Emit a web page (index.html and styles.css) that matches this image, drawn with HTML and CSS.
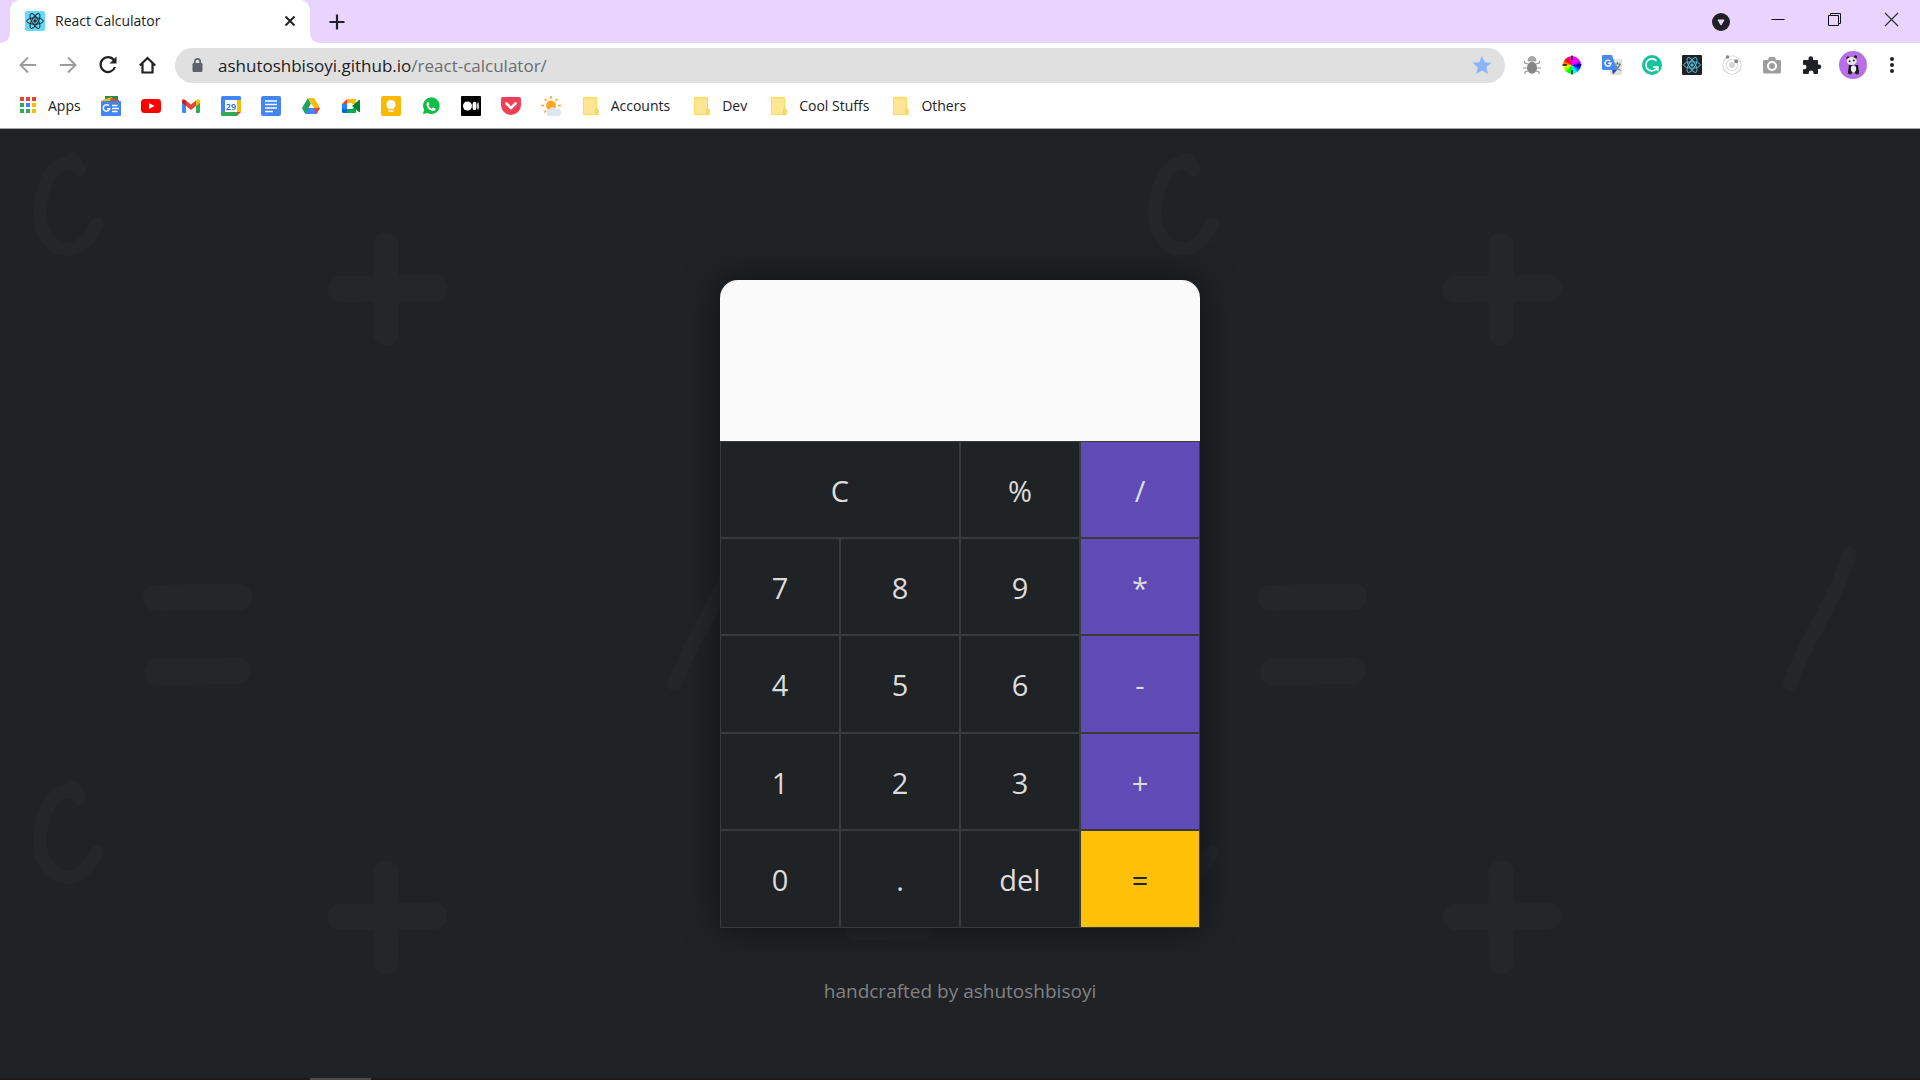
FILE: index.html
```html
<!DOCTYPE html>
<html lang="en">
<head>
<meta charset="utf-8">
<title>React Calculator</title>
<link rel="stylesheet" href="styles.css">
</head>
<body>
<svg class="defs" aria-hidden="true">
  <symbol id="atom" viewBox="0 0 20 20"><g fill="none" stroke="currentColor"><ellipse cx="10" cy="10" rx="8.300" ry="3.200"/><ellipse cx="10" cy="10" rx="8.300" ry="3.200" transform="rotate(60 10 10)"/><ellipse cx="10" cy="10" rx="8.300" ry="3.200" transform="rotate(120 10 10)"/></g><circle cx="10" cy="10" r="1.700" fill="currentColor"/></symbol>
  <symbol id="folder" viewBox="0 0 20 20"><path d="M2 2q0-1 1-1h12q1 0 1 1v16q0 1-1 1H3q-1 0-1-1z" fill="#ffd95c"/><path d="M3 2.500h12V18H3z" fill="#ffe694"/><path d="M14.500 13h1.500q1.500 0 1.500 1.500V17q0 2-1.500 2t-1.500-2z" fill="#f8dc73" stroke="#ebcd55" stroke-width=".7"/></symbol>
</svg>

<header class="browser">
  <div class="tabstrip">
    <div class="tab">
      <svg class="i20 favicon" viewBox="0 0 20 20"><rect width="20" height="20" rx="2" fill="#61dafb"/><use href="#atom" color="#20232a"/></svg>
      <span class="tab-title">React Calculator</span>
      <button class="tab-close" aria-label="Close tab"><svg class="i20" viewBox="0 0 20 20"><path d="M5.500 5.500l9 9M14.500 5.500l-9 9" stroke="#202124" stroke-width="2"/></svg></button>
    </div>
    <button class="new-tab" aria-label="New tab"><svg class="i20" viewBox="0 0 20 20"><path d="M10 2.500v15M2.500 10h15" stroke="#202124" stroke-width="2.200"/></svg></button>
    <div class="window-controls">
      <button aria-label="Search tabs"><svg class="i20" viewBox="0 0 20 20"><circle cx="10" cy="10" r="9" fill="#202124"/><path d="M7 8h6l-3 5z" fill="#e8d4ff" stroke="#e8d4ff"/></svg></button>
      <button aria-label="Minimize"><svg class="i20" viewBox="0 0 20 20"><path d="M3.500 7.500h13" stroke="#111"/></svg></button>
      <button aria-label="Restore"><svg class="i20" viewBox="0 0 20 20"><path d="M3.500 3.500h10v10h-10zM5.500 3V1.500h10v10H14" fill="none" stroke="#111"/></svg></button>
      <button aria-label="Close window"><svg class="i20" viewBox="0 0 20 20"><path d="M3 1l13 13M16 1L3 14" stroke="#333" stroke-width="1.200"/></svg></button>
    </div>
  </div>

  <div class="toolbar">
    <nav class="tools">
      <button aria-label="Back"><svg class="i20" viewBox="0 0 20 20"><path d="M18 10H3M10 2.500L2.500 10l7.500 7.500" fill="none" stroke="#9a9ca0" stroke-width="1.900"/></svg></button>
      <button aria-label="Forward"><svg class="i20" viewBox="0 0 20 20"><path d="M2 10h15M10 2.500l7.500 7.500-7.500 7.500" fill="none" stroke="#9a9ca0" stroke-width="1.900"/></svg></button>
      <button aria-label="Reload"><svg class="i20" viewBox="0 0 20 20"><path d="M15.800 5A7.400 7.400 0 1 0 17 12" fill="none" stroke="#202124" stroke-width="2.200"/><path d="M18.500 1.500v7h-7z" fill="#202124"/></svg></button>
      <button aria-label="Home"><svg class="i20" viewBox="0 0 20 20"><path d="M1.800 10.500L9.500 3l7.700 7.500M4.500 8.500v9h10v-9" fill="none" stroke="#202124" stroke-width="2.200"/></svg></button>
    </nav>
    <div class="omnibox">
      <svg class="i20" viewBox="0 0 20 20"><rect x="4.500" y="8" width="10" height="9" rx="1.200" fill="#5f6368"/><path d="M6.800 8.500V6.500a2.700 2.700 0 0 1 5.400 0v2" fill="none" stroke="#5f6368" stroke-width="1.700"/></svg>
      <a class="url" href="#">ashutoshbisoyi.github.io<span>/react-calculator/</span></a>
      <button aria-label="Bookmark this page"><svg class="i20" viewBox="0 0 20 20"><path d="M10 .8l2.700 6.400 6.800.6-5.200 4.500 1.600 6.800L10 15.500l-5.900 3.600 1.600-6.800L.5 7.800l6.800-.6z" fill="#8ab4f8"/></svg></button>
    </div>
    <div class="tools extensions">
      <button aria-label="Debugger"><svg class="i20" viewBox="0 0 20 20"><path d="M6 9L2.500 8V6M5.500 13H1M6 16l-3 1v2M14 9l3.500-1V6M14.500 13H19M14 16l3 1v2" fill="none" stroke="#999" stroke-width="1.100"/><path d="M6 6q0-4.500 4-4.500T14 6z" fill="#aaa" stroke="#888" stroke-width=".6"/><ellipse cx="10" cy="12.700" rx="5" ry="6" fill="#858585"/></svg></button>
      <button aria-label="Color picker"><span class="wheel"><svg class="i20" viewBox="0 0 20 20"><path d="M10 .5V5M10 15v4.500M.5 10H5M15 10h4.500" stroke="#111" stroke-width="1.400"/></svg></span></button>
      <button aria-label="Translate"><svg class="i20" viewBox="0 0 20 20"><rect x="8" y="4" width="12" height="16" rx="1" fill="#e3e3e3"/><path d="M12 9h7M15.500 7v2M18 9q-1 4-5 6M13.500 10q1.500 4 5 5.500" fill="none" stroke="#607d8b" stroke-width="1.200"/><path d="M10 15h5l-4 4.500z" fill="#3647a5"/><path d="M1 0h9l5 15H1q-1 0-1-1V1q0-1 1-1z" fill="#4a89f3"/><path d="M8.300 6.200A3 3 0 1 0 9 8.300H6.200" fill="none" stroke="#fff" stroke-width="1.400"/></svg></button>
      <button aria-label="Grammar check"><svg class="i20" viewBox="0 0 20 20"><circle cx="10" cy="10" r="10" fill="#15c39a"/><path d="M14.500 6A6 6 0 1 0 15.500 12H11M15.700 11.500V16" fill="none" stroke="#fff" stroke-width="1.700"/></svg></button>
      <button aria-label="React tools"><svg class="i20" viewBox="0 0 20 20"><rect width="20" height="20" rx="1" fill="#222"/><use href="#atom" color="#53b8dc"/></svg></button>
      <button aria-label="Orbit"><svg class="i20" viewBox="0 0 20 20"><g fill="none" stroke="#d9d9d9" stroke-width="1.100"><circle cx="10" cy="10" r="9.200"/><circle cx="10" cy="10" r="5.700"/></g><circle cx="10" cy="10" r="3" fill="#d4d4d4"/><circle cx="5.500" cy="2" r="1.800" fill="#888"/><circle cx="14.200" cy="6.200" r="2" fill="#888"/></svg></button>
      <button aria-label="Screenshot"><svg class="i20" viewBox="0 0 20 20"><path d="M2.500 5H6l1-3h6l1 3h3.500Q19 5 19 6.500V17q0 1.500-1.500 1.500h-15Q1 18.500 1 17V6.500Q1 5 2.500 5z" fill="#9e9e9e"/><circle cx="10" cy="11" r="4" fill="#9e9e9e" stroke="#fff" stroke-width="2"/></svg></button>
      <button aria-label="Extensions"><svg class="i20" viewBox="0 0 20 20"><path d="M2 5h4.500V3.500a2.300 2.300 0 0 1 4.600 0V5H15q1 0 1 1v3.500h1a2.300 2.300 0 0 1 0 4.600h-1V18q0 1-1 1h-3.500v-1.200a2.400 2.400 0 0 0-4.800 0V19H2q-1 0-1-1v-3.700h1.200a2.300 2.300 0 0 0 0-4.600H1V6q0-1 1-1z" fill="#202124"/></svg></button>
      <button class="profile" aria-label="Profile"><svg class="avatar" viewBox="0 0 28 28"><circle cx="14" cy="14" r="14" fill="#b76ee6"/><path d="M10 14h9l1 8H9z" fill="#151515"/><ellipse cx="14.500" cy="18" rx="2.700" ry="3.700" fill="#eee"/><circle cx="9" cy="7" r="1.700" fill="#222"/><circle cx="16.500" cy="6" r="1.700" fill="#222"/><ellipse cx="12.700" cy="10" rx="5" ry="4" fill="#e8e8e8"/><circle cx="10.700" cy="10.200" r="1" fill="#222"/><circle cx="14.800" cy="9.600" r="1" fill="#222"/><circle cx="11" cy="21.500" r="2" fill="#222"/><circle cx="18" cy="21.500" r="2" fill="#222"/></svg></button>
      <button class="menu" aria-label="Menu"><svg class="i20" viewBox="0 0 20 20"><g fill="#202124"><circle cx="10" cy="4" r="2"/><circle cx="10" cy="10" r="2"/><circle cx="10" cy="16" r="2"/></g></svg></button>
    </div>
  </div>

  <nav class="bookmarks">
    <a href="#"><svg class="i20" viewBox="0 0 20 20"><path d="M2 1h4v4H2zM8 1h4v4H8zM14 1h4v4h-4z" fill="#ea4335"/><path d="M2 7h4v4H2z" fill="#34a853"/><path d="M8 7h4v4H8z" fill="#4285f4"/><path d="M14 7h4v4h-4zM14 13h4v4h-4z" fill="#fbbc05"/><path d="M2 13h4v4H2zM8 13h4v4H8z" fill="#34a853"/></svg>Apps</a>
    <a href="#" aria-label="News"><svg class="i20" viewBox="0 0 20 20"><path d="M4 0h13v7H4z" fill="#1e8e4e"/><path d="M1 4l10-3 2 6H2z" fill="#fbbc05"/><path d="M10 2l8 2v4H8z" fill="#ea4335"/><rect y="5" width="20" height="15" rx="1" fill="#4285f4"/><path d="M7.800 9.800a3.200 3.200 0 1 0 .8 3H6M11 9.500h5.500M11 12.500h7M11 15.500h5.500" fill="none" stroke="#fff" stroke-width="1.500"/></svg></a>
    <a href="#" aria-label="YouTube"><svg class="i20" viewBox="0 0 20 20"><rect y="3" width="20" height="14" rx="3.500" fill="#f00"/><path d="M8 7l5.500 3L8 13z" fill="#fff"/></svg></a>
    <a href="#" aria-label="Gmail"><svg class="i20" viewBox="0 0 20 20"><path d="M1 5l4 3v9H2.500Q1 17 1 15.500z" fill="#4285f4"/><path d="M19 5l-4 3v9h2.500q1.500 0 1.500-1.500z" fill="#34a853"/><path d="M15 4.500l1-.8q3-1.700 3 1.800V7l-4 3z" fill="#fbbc04"/><path d="M5 4.500l-1-.8Q1 2 1 5.500V7l4 3z" fill="#c5221f"/><path d="M5 4.500l5 4 5-4V10l-5 4-5-4z" fill="#ea4335"/></svg></a>
    <a href="#" aria-label="Calendar"><svg class="i20" viewBox="0 0 20 20"><path d="M1.500 0H18.500Q20 0 20 1.500V16H0V1.500Q0 0 1.500 0z" fill="#4285f4"/><path d="M16 4h4v12h-4z" fill="#fbbc04"/><path d="M0 16h16v4H1.500Q0 20 0 18.500z" fill="#34a853"/><path d="M16 16h4l-4 4z" fill="#ea4335"/><path d="M4 4h12v12H4z" fill="#fff"/><text class="cal-day" x="10" y="14" text-anchor="middle">29</text></svg></a>
    <a href="#" aria-label="Docs"><svg class="i20" viewBox="0 0 20 20"><rect width="20" height="20" rx="2" fill="#4285f4"/><path d="M4 5h12M4 8.500h12M4 12h12M4 15.500h8" stroke="#fff" stroke-width="1.600"/></svg></a>
    <a href="#" aria-label="Drive"><svg class="i20" viewBox="0 0 20 20"><path d="M7 2h6l6 10h-6z" fill="#ffba00"/><path d="M6.500 12H19l-3.500 6h-11L1.500 12.500z" fill="#4285f4"/><path d="M7 2L1 12l3.500 6L10 8z" fill="#1da462"/><path d="M13 12h6l-3.500 6z" fill="#ea4335"/><path d="M10 8l2.500 4h-5z" fill="#fff"/></svg></a>
    <a href="#" aria-label="Meet"><svg class="i20" viewBox="0 0 20 20"><path d="M1 8l5-5v5z" fill="#ea4335"/><path d="M6 3h8q1 0 1 1v4h-4V7H6z" fill="#fbbc04"/><path d="M1 8h5v5H1z" fill="#2684fc"/><path d="M1 13h5v4H2.500Q1 17 1 15.500z" fill="#0066da"/><path d="M6 13h5l4-3v6q0 1-1 1H6z" fill="#00ac47"/><path d="M11 10l7-6q1-.5 1 .5v11q0 1-1 .5z" fill="#00832d"/><path d="M6 7h5v6H6z" fill="#fff"/></svg></a>
    <a href="#" aria-label="Keep"><svg class="i20" viewBox="0 0 20 20"><rect width="20" height="20" rx="2" fill="#fbb905"/><circle cx="10" cy="8.500" r="4.600" fill="#fff"/><path d="M7.500 11h5v2h-5zM7.500 14.200h5v1.500h-5z" fill="#fff"/></svg></a>
    <a href="#" aria-label="WhatsApp"><svg class="i20" viewBox="0 0 20 20"><path d="M2 18l1-4.500a8.300 8.300 0 1 1 3.300 3.400z" fill="#12bd45"/><path d="M7 5.500l1.500 2.800-1 1.200q1.200 2.300 3.300 3.200l1.300-1.300 2.700 1.300q-.3 2.300-2.800 2.200-5.500-1-6.500-6.500 0-2 1.500-2.900z" fill="#fff"/></svg></a>
    <a href="#" aria-label="Medium"><svg class="i20" viewBox="0 0 20 20"><rect width="20" height="20" rx="1" fill="#000"/><circle cx="6.500" cy="10" r="4.500" fill="#fff"/><ellipse cx="13.500" cy="10" rx="2" ry="4.300" fill="#fff"/><ellipse cx="17" cy="10" rx=".8" ry="3.800" fill="#fff"/></svg></a>
    <a href="#" aria-label="Pocket"><svg class="i20" viewBox="0 0 20 20"><path d="M2 1h16q2 0 2 2v6a10 10 0 0 1-20 0V3q0-2 2-2z" fill="#ef4056"/><path d="M5.500 7.500L10 12l4.500-4.500" fill="none" stroke="#fff" stroke-width="2.500" stroke-linecap="round" stroke-linejoin="round"/></svg></a>
    <a href="#" aria-label="Weather"><svg class="i20" viewBox="0 0 20 20"><circle cx="10" cy="9.500" r="5" fill="#ffa726"/><path d="M10 0v2.800M3.500 3l2 1.700M16.500 3l-2 1.700M0 9.500h3M17 9.500h3M3 16.500l2-2" stroke="#ffa726" stroke-width="1.600"/><path d="M8 20a3.300 3.300 0 0 1 0-6.500 4 4 0 0 1 7-.5 3.600 3.600 0 0 1 3 7z" fill="#dfe6ee"/></svg></a>
    <a class="folder" href="#"><svg class="i20"><use href="#folder"/></svg>Accounts</a>
    <a class="folder" href="#"><svg class="i20"><use href="#folder"/></svg>Dev</a>
    <a class="folder" href="#"><svg class="i20"><use href="#folder"/></svg>Cool Stuffs</a>
    <a class="folder" href="#"><svg class="i20"><use href="#folder"/></svg>Others</a>
  </nav>
</header>

<main class="page">
  <svg class="backdrop" aria-hidden="true">
    <defs>
      <pattern id="symbols" width="1115" height="628" patternUnits="userSpaceOnUse">
        <g fill="none" stroke="#23272a" stroke-linecap="round" stroke-linejoin="round">
          <path stroke-width="13" d="M79 41Q74 34 67 34C50 36 40 62 40 84C40 105 51 120 68 120C82 120 91 108 97 95"/>
          <path stroke-width="11" d="M73 29Q77 33 79 41"/>
          <path stroke-width="25" d="M386 116v88"/>
          <path stroke-width="26" d="M341 160l93-1"/>
          <path stroke-width="26" d="M156 469l83-1M158 543l79-1"/>
          <path stroke-width="26" d="M857 798l63-1"/>
          <path stroke-width="26" d="M857 170l63-1"/>
          <path stroke-width="14" d="M734 425C728 445 722 460 715 472C705 495 687 520 675 555"/>
        </g>
      </pattern>
    </defs>
    <rect width="100%" height="100%" fill="url(#symbols)"/>
  </svg>
  <section class="calculator">
    <output class="display" aria-label="Result"></output>
    <div class="keys">
      <button class="wide">C</button><button>%</button><button class="op">/</button>
      <button>7</button><button>8</button><button>9</button><button class="op">*</button>
      <button>4</button><button>5</button><button>6</button><button class="op">-</button>
      <button>1</button><button>2</button><button>3</button><button class="op">+</button>
      <button>0</button><button>.</button><button>del</button><button class="equals">=</button>
    </div>
  </section>
  <footer class="credit">handcrafted by ashutoshbisoyi</footer>
</main>
<div class="taskbar-edge"><span></span></div>
</body>
</html>
```
FILE: styles.css
```css
* { box-sizing: border-box; }

body {
  margin: 0;
  min-height: 100vh;
  display: flex;
  flex-direction: column;
  font-family: "Open Sans", "Noto Sans", sans-serif;
  font-size: 14px;
  color: #202124;
  background: #1f2326;
}

button {
  padding: 0;
  border: 0;
  background: none;
  font: inherit;
  color: inherit;
}

a { color: inherit; text-decoration: none; }
svg { display: block; flex: none; }
.defs { position: absolute; width: 0; height: 0; }
.i20 { width: 20px; height: 20px; }

/* Browser frame */
.browser { background: #fff; border-bottom: 1px solid #a6a6a8; }

.tabstrip {
  display: flex;
  height: 43px;
  padding-left: 10px;
  background: #e8d4ff;
}

.tab {
  position: relative;
  display: flex;
  align-items: center;
  width: 300px;
  padding: 0 10px 2px 15px;
  background: #fff;
  border-radius: 10px 10px 0 0;
}

.tab::before,
.tab::after {
  content: "";
  position: absolute;
  bottom: 0;
  width: 10px;
  height: 10px;
}

.tab::before { right: 100%; background: radial-gradient(circle at 0 0, #e8d4ff 10px, #fff 10px); }
.tab::after { left: 100%; background: radial-gradient(circle at 100% 0, #e8d4ff 10px, #fff 10px); }
.tab-title { flex: 1; margin-left: 10px; }
.new-tab { margin-left: 17px; }

.window-controls { display: flex; align-items: center; margin-left: auto; }
.window-controls button { display: flex; justify-content: center; width: 57px; }

.toolbar { display: flex; align-items: center; height: 44px; padding: 0 10px 0 8px; }
.tools { display: flex; align-items: center; }
.tools button { display: flex; justify-content: center; width: 40px; }
.toolbar nav { margin-right: 7px; }
.tools .profile { width: 42px; }
.tools .menu { width: 36px; }
.avatar { width: 28px; height: 28px; }
.extensions { margin-left: 7px; }

.wheel {
  display: grid;
  place-content: center;
  width: 18px;
  height: 18px;
  border-radius: 50%;
  background: conic-gradient(#f0f, #f0f, #00f, #0ff, #0f0, #ff0, #f00, #f0f);
}

.omnibox {
  flex: 1;
  display: flex;
  align-items: center;
  height: 35px;
  padding: 0 13px;
  border-radius: 18px;
  background: #e0e0e0;
}

.url { flex: 1; margin-left: 10px; font-size: 17px; }
.url span { color: #6a6c70; }

.bookmarks {
  display: flex;
  align-items: center;
  gap: 20px;
  height: 41px;
  padding: 0 18px 4px;
}

.bookmarks a { display: flex; align-items: center; gap: 10px; }
.bookmarks .folder { margin-right: 2px; }
.cal-day { font-size: 9px; font-weight: 600; fill: #1967d2; }

/* Calculator page */
.page {
  position: relative;
  isolation: isolate;
  flex: 1;
  display: grid;
  grid-template-rows: 1fr auto 1fr;
  justify-items: center;
}

.backdrop { position: absolute; inset: 0; width: 100%; height: 100%; z-index: -1; }

.calculator {
  grid-row: 2;
  width: 100%;
  max-width: 480px;
  background: #1f2326;
  box-shadow: 0 0 32px rgba(0, 0, 0, 0.5);
}

.display { display: block; height: 161px; border-radius: 18px 18px 0 0; background: #fafafa; }

.keys {
  display: grid;
  grid-template-columns: repeat(4, 1fr);
  grid-template-rows: repeat(5, 1fr);
  height: 487px;
}

.keys button { padding-top: 2px; border: 1px solid #383a3c; font-size: 29px; color: #dcdcdc; }
.keys .wide { grid-column: span 2; }
.keys .op { background: #5f4bb6; }
.keys .equals { background: #ffc107; color: #1f2326; }

.credit { grid-row: 3; padding-top: 50px; font-size: 19px; color: #808284; }

.taskbar-edge { height: 2px; padding-left: 310px; background: #1e191a; }
.taskbar-edge span { display: block; width: 61px; height: 2px; background: #4c4a4a; }
```
